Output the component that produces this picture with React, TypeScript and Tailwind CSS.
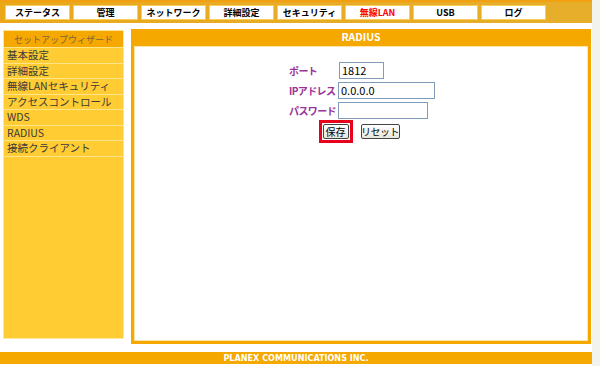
const tabs = ['ステータス', '管理', 'ネットワーク', '詳細設定', 'セキュリティ', '無線LAN', 'USB', 'ログ']

const menu = ['基本設定', '詳細設定', '無線LANセキュリティ', 'アクセスコントロール', 'WDS', 'RADIUS', '接続クライアント']

const font = "font-['Noto_Sans_CJK_JP','Liberation_Sans',sans-serif]"

const label = 'w-[49px] shrink-0 whitespace-nowrap text-[10px] font-bold tracking-[-0.6px] text-[#993399]'
const btn =
  'flex h-[15px] items-center justify-center whitespace-nowrap rounded-[2px] border border-[#444] bg-gradient-to-b from-white to-[#e6e6df] text-[10px] leading-none text-black'

export default function App() {
  return (
    <div className={`flex h-[366px] w-[600px] bg-[#f3f3ee] ${font}`}>
      <div className="flex w-[592px] flex-col bg-white">
        {/* top tabs */}
        <div className="flex h-[23px] gap-[3px] border-t-2 border-[#f0a010] bg-gradient-to-r from-[#eaa818] via-[#e8ac26] to-[#e6ae2a] pl-[5px] pt-[3px]">
          {tabs.map((t) => (
            <div
              key={t}
              className={`flex h-[15px] w-[65px] items-center justify-center whitespace-nowrap border border-[#f7cf5a] bg-white text-[9px] font-bold leading-none ${
                t === '無線LAN' ? 'text-[#ff0000]' : 'text-black'
              }`}
            >
              {t}
            </div>
          ))}
        </div>

        <div className="flex">
          {/* sidebar */}
          <div className="ml-[3px] mt-[7px] flex h-[309px] w-[121px] flex-col border border-[#ffe79a] bg-[#ffcc33]">
            <div className="flex h-[16px] items-center justify-center whitespace-nowrap bg-[#f5a800] text-[9px] leading-none text-[#7a6440]">
              セットアップウィザード
            </div>
            {menu.map((m) => (
              <div
                key={m}
                className="flex h-[15.5px] items-center whitespace-nowrap border-t border-[#ffe48a] pl-[3px] text-[10.5px] leading-none text-[#3a3a3a]"
              >
                {m}
              </div>
            ))}
            <div className="border-t border-[#ffe48a]" />
          </div>

          {/* main panel */}
          <div className="ml-[7px] mt-[6px] flex h-[315px] w-[460px] flex-col bg-[#f5a800] px-[3px] pb-[3px]">
            <div className="flex h-[17px] items-center justify-center text-[10.5px] font-bold leading-none text-white">
              RADIUS
            </div>
            <div className="flex flex-1 flex-col items-center border border-[#fde6a8] bg-white pt-[15px]">
              <div className="ml-[2px] flex flex-col gap-[3px]">
                <div className="flex h-[17px] items-center">
                  <span className={`${label} w-[50px]`}>ポート</span>
                  <div className="flex h-[17px] w-[45px] items-center border border-[#7f9db9] px-[2px] text-[11px] text-black">1812</div>
                </div>
                <div className="flex h-[17px] items-center">
                  <span className={label}>IPアドレス</span>
                  <div className="flex h-[17px] w-[97px] items-center border border-[#7f9db9] px-[2px] text-[11px] text-black">0.0.0.0</div>
                </div>
                <div className="flex h-[17px] items-center">
                  <span className={label}>パスワード</span>
                  <div className="h-[17px] w-[90px] border border-[#7f9db9]" />
                </div>
              </div>
              <div className="ml-[-4px] mt-[1px] flex items-center gap-[8px]">
                <div className="flex h-[23px] w-[34px] items-center justify-center border-[3px] border-[#e8001c]">
                  <div className={`${btn} w-[26px]`}>保存</div>
                </div>
                <div className={`${btn} w-[39px] tracking-[-0.5px]`}>リセット</div>
              </div>
            </div>
          </div>
        </div>

        {/* footer */}
        <div className="mt-[8px] flex h-[12px] items-center justify-center bg-[#f5a800] font-['DejaVu_Sans_Condensed','Liberation_Sans',sans-serif] text-[9px] font-bold leading-none text-white">
          PLANEX COMMUNICATIONS INC.
        </div>
      </div>
    </div>
  )
}
